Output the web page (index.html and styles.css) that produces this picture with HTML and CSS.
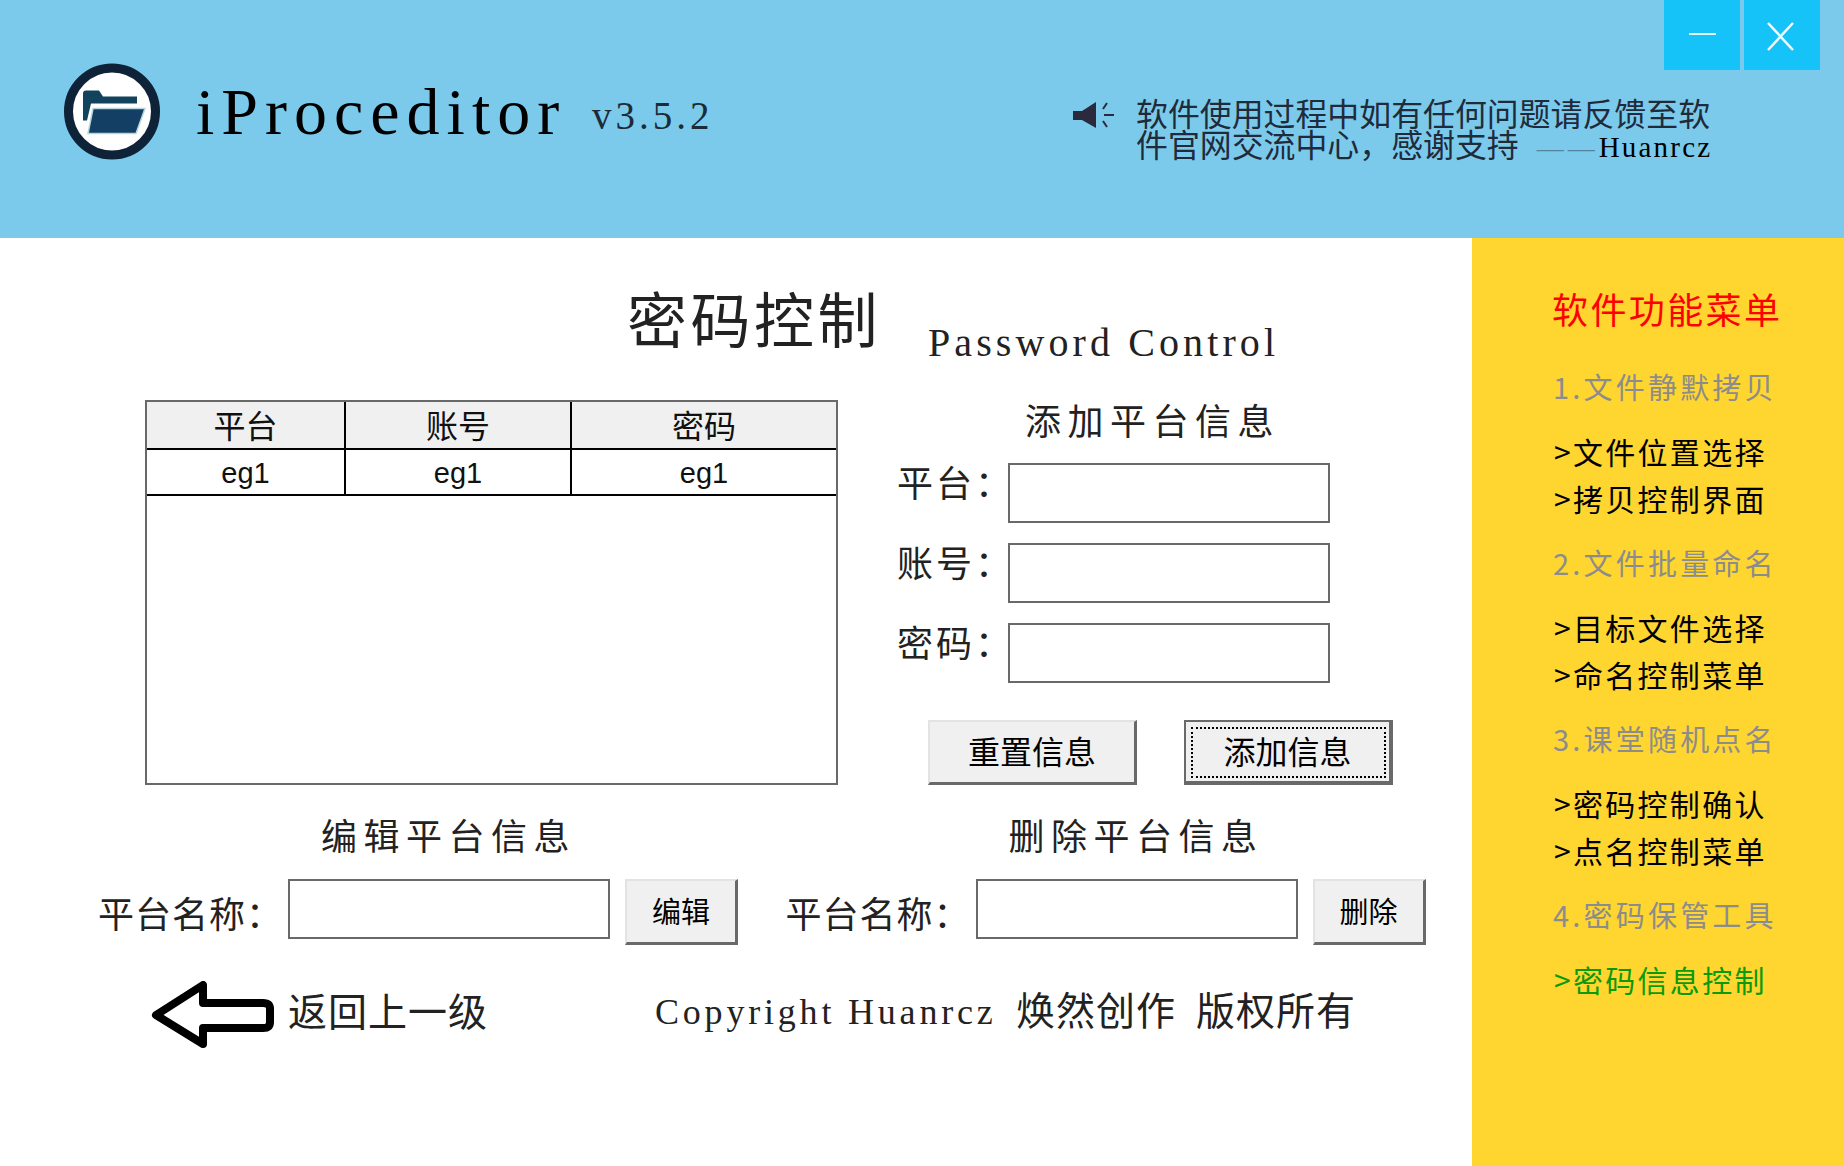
FILE: index.html
```html
<!DOCTYPE html>
<html>

<head>
    <meta charset="UTF-8">
    <title>iProceditor</title>
    <link rel="stylesheet" href="styles.css">
</head>

<body>
    <div class="header">
        <svg class="logo" viewBox="0 0 96 96">
            <circle cx="48" cy="48" r="43.5" fill="#fff" stroke="#0e2238" stroke-width="9" />
            <path d="M19 57 V30 Q19 27 22 27 H35 L39 33 H73 V40 H27 L23 57 Z" fill="#12435c" />
            <path d="M29 45 H81 L72 70 H24 Z" fill="#123f63" stroke="#b9d6dc" stroke-width="1.5" />
        </svg>
        <div class="brand">iProceditor</div>
        <div class="version">v3.5.2</div>
        <svg class="speaker" viewBox="0 0 41 26">
            <path d="M0 9 H9 L23 0 V26 L9 18 H0 Z" fill="#2a2a3c" />
            <path d="M30 7 L34 1 M31 13 H41 M30 19 L34 25" stroke="#2a2a3c" stroke-width="2" fill="none" />
        </svg>
        <div class="notice">
            <div class="notice-line">软件使用过程中如有任何问题请反馈至软</div>
            <div class="notice-line">件官网交流中心，感谢支持<span class="dash">——</span><span class="notice-name">Huanrcz</span></div>
        </div>
        <div class="win-btns">
            <div class="win-btn">
                <svg viewBox="0 0 76 70"><path d="M25 34 H52" stroke="#e4f6fc" stroke-width="2" /></svg>
            </div>
            <div class="win-btn">
                <svg viewBox="0 0 76 70"><path d="M24 23 L49 50 M49 23 L24 50" stroke="#f2fbfe" stroke-width="2.5" /></svg>
            </div>
        </div>
    </div>

    <div class="main">
        <div class="content">
            <div class="title-row">
                <div class="title">密码控制</div>
                <div class="title-en">Password Control</div>
            </div>

            <div class="middle">
                <div class="table-box">
                    <div class="t-row t-head">
                        <div class="t-cell c1">平台</div>
                        <div class="t-cell c2">账号</div>
                        <div class="t-cell c3">密码</div>
                    </div>
                    <div class="t-row t-body">
                        <div class="t-cell c1">eg1</div>
                        <div class="t-cell c2">eg1</div>
                        <div class="t-cell c3">eg1</div>
                    </div>
                </div>

                <div class="add-form">
                    <div class="sub-title add-title">添加平台信息</div>
                    <div class="form-row">
                        <label class="form-label">平台：</label>
                        <input type="text" class="field">
                    </div>
                    <div class="form-row">
                        <label class="form-label">账号：</label>
                        <input type="text" class="field">
                    </div>
                    <div class="form-row">
                        <label class="form-label">密码：</label>
                        <input type="text" class="field">
                    </div>
                    <div class="form-btns">
                        <button class="btn btn-big">重置信息</button>
                        <button class="btn btn-big btn-focus">添加信息</button>
                    </div>
                </div>
            </div>

            <div class="lower">
                <div class="lower-part lower-edit">
                    <div class="sub-title lower-title">编辑平台信息</div>
                    <div class="lower-row">
                        <label class="form-label">平台名称：</label>
                        <input type="text" class="field">
                        <button class="btn btn-small">编辑</button>
                    </div>
                </div>
                <div class="lower-part">
                    <div class="sub-title lower-title">删除平台信息</div>
                    <div class="lower-row">
                        <label class="form-label">平台名称：</label>
                        <input type="text" class="field">
                        <button class="btn btn-small">删除</button>
                    </div>
                </div>
            </div>

            <div class="footer">
                <svg class="back-arrow" viewBox="0 0 123 68">
                    <path d="M5 34 L52 4 V22 H112 Q119 22 119 28 V41 Q119 47 112 47 H52 V63 Z" fill="none" stroke="#000" stroke-width="8" stroke-linejoin="round" />
                </svg>
                <div class="back-text">返回上一级</div>
                <div class="copyright"><span class="copy-en">Copyright Huanrcz</span><span class="copy-cn">焕然创作</span><span class="copy-cn">版权所有</span></div>
            </div>
        </div>

        <div class="sidebar">
            <div class="side-title">软件功能菜单</div>
            <div class="side-group">
                <div class="side-head">1.文件静默拷贝</div>
                <div class="side-item">&gt;文件位置选择</div>
                <div class="side-item">&gt;拷贝控制界面</div>
            </div>
            <div class="side-group">
                <div class="side-head">2.文件批量命名</div>
                <div class="side-item">&gt;目标文件选择</div>
                <div class="side-item">&gt;命名控制菜单</div>
            </div>
            <div class="side-group">
                <div class="side-head">3.课堂随机点名</div>
                <div class="side-item">&gt;密码控制确认</div>
                <div class="side-item">&gt;点名控制菜单</div>
            </div>
            <div class="side-group">
                <div class="side-head">4.密码保管工具</div>
                <div class="side-item side-active">&gt;密码信息控制</div>
            </div>
        </div>
    </div>
</body>

</html>
```

FILE: styles.css
```css
* {
    margin: 0;
    padding: 0;
    box-sizing: border-box;
}

body,
html {
    height: 100%;
    overflow: hidden;
}

body {
    background: #fff;
    color: #111;
    font-family: "Liberation Serif", "Noto Sans CJK SC", serif;
}

/* header */
.header {
    height: 238px;
    background-color: #7bcaeb;
    display: flex;
    align-items: flex-start;
    padding-left: 64px;
}

.logo {
    width: 96px;
    height: 97px;
    margin-top: 63px;
    flex: none;
}

.brand {
    margin-left: 36px;
    margin-top: 76px;
    font-size: 66px;
    line-height: 72px;
    letter-spacing: 7px;
    width: 396px;
    color: #000;
}

.version {
    margin-top: 94px;
    font-size: 39px;
    line-height: 44px;
    letter-spacing: 4px;
    width: 481px;
    color: #1c2b38;
}

.speaker {
    width: 41px;
    height: 26px;
    margin-top: 102px;
    flex: none;
}

.notice {
    margin-left: 22px;
    margin-top: 97px;
    width: 528px;
    font-family: "Noto Sans CJK SC", sans-serif;
    font-size: 31.9px;
    white-space: nowrap;
    color: #1f2b3a;
}

.notice-line {
    height: 31px;
    line-height: 31px;
}

.dash {
    margin-left: 18px;
    font-family: "Liberation Serif", serif;
    color: #53849e;
    letter-spacing: 4px;
    font-size: 27px;
}

.notice-name {
    font-family: "Liberation Serif", serif;
    font-size: 29px;
    letter-spacing: 2.2px;
    color: #000;
}

.win-btns {
    display: flex;
    gap: 4px;
}

.win-btn {
    width: 76px;
    height: 70px;
    background-color: #15c3f8;
}

.win-btn svg {
    display: block;
    width: 76px;
    height: 70px;
}

/* main area */
.main {
    height: 928px;
    display: flex;
}

.content {
    width: 1472px;
}

.title-row {
    display: flex;
    align-items: flex-start;
    padding-left: 627px;
    padding-top: 43px;
    height: 162px;
}

.title {
    font-family: "Noto Sans CJK SC", sans-serif;
    font-size: 60px;
    line-height: 72px;
    letter-spacing: 3.5px;
    width: 301px;
    color: #222;
}

.title-en {
    margin-top: 39px;
    font-size: 40px;
    line-height: 46px;
    letter-spacing: 4.1px;
    white-space: nowrap;
    color: #222;
}

.middle {
    display: flex;
    padding-left: 145px;
}

/* table */
.table-box {
    width: 693px;
    height: 385px;
    border: 2px solid #696969;
    flex: none;
}

.t-row {
    display: flex;
    border-bottom: 2px solid #000;
    font-family: "Liberation Sans", "Noto Sans CJK SC", sans-serif;
    text-align: center;
    color: #111;
}

.t-head {
    height: 48px;
    background: #f0f0f0;
    font-size: 32px;
    line-height: 50px;
}

.t-body {
    height: 46px;
    font-size: 29px;
    line-height: 46px;
}

.t-cell {
    border-right: 2px solid #000;
}

.c1 {
    width: 199px;
}

.c2 {
    width: 226px;
}

.c3 {
    width: 264px;
    border-right: 0;
}

/* add form */
.add-form {
    margin-left: 59px;
}

.sub-title {
    font-family: "Noto Sans CJK SC", sans-serif;
    font-size: 36px;
    line-height: 42px;
    letter-spacing: 6.5px;
    color: #222;
    white-space: nowrap;
}

.add-title {
    padding-left: 128px;
    margin-top: -2px;
    margin-bottom: 23px;
}

.form-row {
    display: flex;
    height: 60px;
    margin-bottom: 20px;
}

.form-label {
    width: 111px;
    font-family: "Noto Sans CJK SC", sans-serif;
    font-size: 36px;
    line-height: 42px;
    letter-spacing: 3px;
    color: #222;
    white-space: nowrap;
    margin-top: -3px;
}

.field {
    width: 322px;
    height: 60px;
    border: 2px solid #696969;
    background: #fff;
    display: block;
}

.form-btns {
    display: flex;
    gap: 47px;
    margin-left: 31px;
    margin-top: 37px;
}

.btn {
    background: #f0f0f0;
    border: 2px solid;
    border-color: #e3e3e3 #696969 #696969 #e3e3e3;
    border-bottom-width: 3px;
    border-right-width: 3px;
    font-family: "Noto Sans CJK SC", sans-serif;
    color: #000;
}

.btn-big {
    width: 209px;
    height: 65px;
    font-size: 32px;
    line-height: 42px;
    padding-bottom: 4px;
}

.btn-focus {
    border-color: #696969;
    border-width: 2px 4px 4px 2px;
    outline: 2px dotted #000;
    outline-offset: -9px;
}

.btn-small {
    width: 113px;
    height: 66px;
    font-size: 29px;
    line-height: 40px;
    padding-bottom: 3px;
    margin-left: 15px;
}

/* edit and delete */
.lower {
    display: flex;
    padding-left: 98px;
    margin-top: 28px;
}

.lower-part {
    width: 688px;
}

.lower-edit {
    width: 689px;
}

.lower-title {
    padding-left: 223px;
    margin-bottom: 24px;
}

.lower-row {
    display: flex;
    align-items: flex-start;
}

.lower-row .form-label {
    width: 190px;
    margin-top: 12px;
    letter-spacing: 1px;
}

/* footer */
.footer {
    display: flex;
    align-items: center;
    margin-top: 36px;
    padding-left: 151px;
}

.back-arrow {
    width: 123px;
    height: 68px;
    flex: none;
}

.back-text {
    margin-left: 14px;
    width: 367px;
    font-family: "Noto Sans CJK SC", sans-serif;
    font-size: 39px;
    line-height: 50px;
    letter-spacing: 1px;
    color: #222;
    margin-top: -13px;
}

.copyright {
    display: flex;
    align-items: center;
    margin-top: -6px;
    white-space: nowrap;
    color: #222;
}

.copy-en {
    font-size: 36px;
    letter-spacing: 3.8px;
    width: 361px;
}

.copy-cn {
    font-family: "Noto Sans CJK SC", sans-serif;
    font-size: 39px;
    line-height: 50px;
    width: 180px;
    letter-spacing: 1px;
    margin-top: -8px;
}

/* sidebar */
.sidebar {
    width: 372px;
    background-color: #ffd530;
    padding-left: 80px;
    padding-top: 48px;
    font-family: "Noto Sans CJK SC", sans-serif;
}

.side-title {
    font-size: 36px;
    line-height: 44px;
    letter-spacing: 2.4px;
    color: #f00;
    margin-bottom: 34px;
    white-space: nowrap;
}

.side-group {
    margin-bottom: 18px;
}

.side-head {
    font-size: 29px;
    line-height: 44px;
    letter-spacing: 3.2px;
    color: #8c8c8c;
    margin-bottom: 20px;
    padding-left: 1px;
    white-space: nowrap;
}

.side-item {
    font-size: 30px;
    line-height: 47px;
    letter-spacing: 2.3px;
    color: #000;
    padding-left: 2px;
    white-space: nowrap;
}

.side-active {
    color: #0a9a0a;
}
```
